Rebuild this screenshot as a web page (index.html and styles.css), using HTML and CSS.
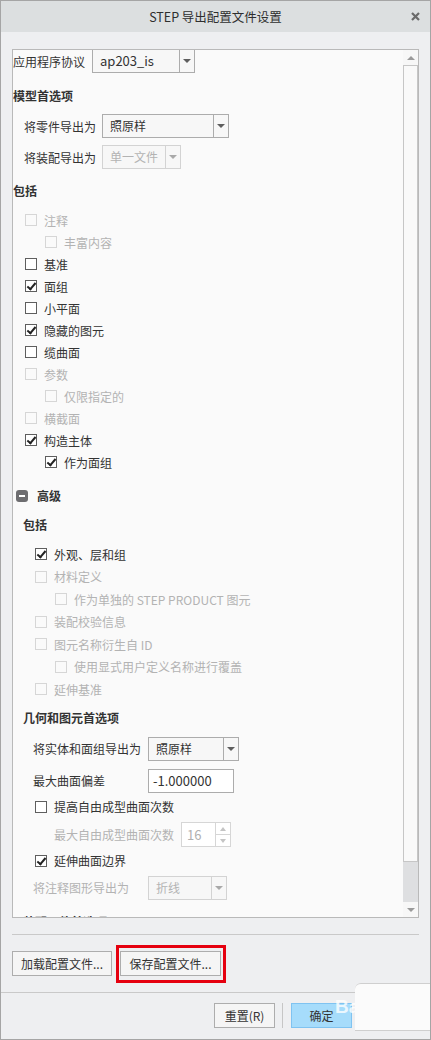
FILE: index.html
```html
<!DOCTYPE html>
<html lang="zh-CN">
<head>
    <meta charset="UTF-8">
    <title>STEP 导出配置文件设置</title>
    <link rel="stylesheet" href="styles.css">
</head>
<body>
    <div class="window">
        <div class="titlebar">
            <span class="title">STEP 导出配置文件设置</span>
            <svg class="close" width="9" height="9" viewBox="0 0 9 9">
                <path d="M1 1 L8 8 M8 1 L1 8" stroke="#6a6a6a" stroke-width="2.2" fill="none"/>
            </svg>
        </div>

        <div class="body">
            <div class="panel">
                <div class="panel-content">
                    <div class="row row-first">
                        <span class="label w-app">应用程序协议</span>
                        <div class="select sel-app"><span class="select-text">ap203_is</span><span class="select-arrow"></span></div>
                    </div>

                    <div class="heading mt12">模型首选项</div>
                    <div class="row mt7 indent-1">
                        <span class="label w-model">将零件导出为</span>
                        <div class="select sel-part"><span class="select-text">照原样</span><span class="select-arrow"></span></div>
                    </div>
                    <div class="row mt7 indent-1">
                        <span class="label w-model">将装配导出为</span>
                        <div class="select sel-asm disabled"><span class="select-text">单一文件</span><span class="select-arrow"></span></div>
                    </div>

                    <div class="heading mt11">包括</div>
                    <div class="checks mt7">
                        <div class="check lvl-1 disabled"><span class="box"></span>注释</div>
                        <div class="check lvl-2 disabled"><span class="box"></span>丰富内容</div>
                        <div class="check lvl-1"><span class="box"></span>基准</div>
                        <div class="check lvl-1"><span class="box checked"></span>面组</div>
                        <div class="check lvl-1"><span class="box"></span>小平面</div>
                        <div class="check lvl-1"><span class="box checked"></span>隐藏的图元</div>
                        <div class="check lvl-1"><span class="box"></span>缆曲面</div>
                        <div class="check lvl-1 disabled"><span class="box"></span>参数</div>
                        <div class="check lvl-2 disabled"><span class="box"></span>仅限指定的</div>
                        <div class="check lvl-1 disabled"><span class="box"></span>横截面</div>
                        <div class="check lvl-1"><span class="box checked"></span>构造主体</div>
                        <div class="check lvl-2"><span class="box checked"></span>作为面组</div>
                    </div>

                    <div class="heading advanced mt12"><span class="collapse"></span>高级</div>
                    <div class="heading sub mt7">包括</div>
                    <div class="checks adv mt7">
                        <div class="check lvl-3"><span class="box checked"></span>外观、层和组</div>
                        <div class="check lvl-3 disabled"><span class="box"></span>材料定义</div>
                        <div class="check lvl-4 disabled"><span class="box"></span>作为单独的 STEP PRODUCT 图元</div>
                        <div class="check lvl-3 disabled"><span class="box"></span>装配校验信息</div>
                        <div class="check lvl-3 disabled"><span class="box"></span>图元名称衍生自 ID</div>
                        <div class="check lvl-4 disabled"><span class="box"></span>使用显式用户定义名称进行覆盖</div>
                        <div class="check lvl-3 disabled"><span class="box"></span>延伸基准</div>
                    </div>

                    <div class="heading sub mt6">几何和图元首选项</div>
                    <div class="row mt8 indent-2">
                        <span class="label w-geom">将实体和面组导出为</span>
                        <div class="select sel-solid"><span class="select-text">照原样</span><span class="select-arrow"></span></div>
                    </div>
                    <div class="row mt8 indent-2">
                        <span class="label w-geom">最大曲面偏差</span>
                        <div class="input">-1.000000</div>
                    </div>
                    <div class="check lvl-3 mt3"><span class="box"></span>提高自由成型曲面次数</div>
                    <div class="row mt5 indent-3 disabled">
                        <span class="label w-spin">最大自由成型曲面次数</span>
                        <div class="spinner">
                            <span class="spin-text">16</span>
                            <span class="spin-btns"><span class="spin-up"></span><span class="spin-down"></span></span>
                        </div>
                    </div>
                    <div class="check lvl-3 mt3"><span class="box checked"></span>延伸曲面边界</div>
                    <div class="row mt4 indent-2 disabled">
                        <span class="label w-geom">将注释图形导出为</span>
                        <div class="select sel-note disabled"><span class="select-text">折线</span><span class="select-arrow"></span></div>
                    </div>
                    <div class="heading sub mt11">装配元件首选项</div>
                </div>

                <div class="scrollbar">
                    <span class="sb-btn sb-up"></span>
                    <span class="sb-thumb"></span>
                    <span class="sb-track"></span>
                    <span class="sb-btn sb-down"></span>
                </div>
            </div>

            <div class="divider"></div>

            <div class="file-row">
                <button class="btn btn-load">加载配置文件...</button>
                <div class="highlight">
                    <button class="btn btn-save">保存配置文件...</button>
                </div>
            </div>
        </div>

        <div class="footer-line"></div>
        <div class="footer">
            <button class="btn btn-reset">重置(R)</button>
            <span class="footer-sep"></span>
            <button class="btn btn-ok">确定</button>
        </div>

        <div class="wm-text">Bai</div>
        <div class="wm-box"></div>
    </div>
</body>
</html>
```

FILE: styles.css
```css
body { margin: 0; font-family: "Noto Sans CJK SC", "Noto Sans", sans-serif; font-size: 12px; color: #333; background: #fff; }
.window { position: relative; width: 431px; height: 1040px; box-sizing: border-box; border: 1px solid #a5a5a5; background: #eeeff1; overflow: hidden; }

/* title bar */
.titlebar { position: relative; height: 31px; background: #dcdfe0; display: flex; align-items: center; justify-content: center; }
.title { font-size: 12.5px; color: #2e2e2e; }
.close { position: absolute; right: 10px; top: 11px; }

.body { padding: 17px 11px 0 11px; }

/* scroll panel */
.panel { display: flex; height: 869px; box-sizing: border-box; border: 1px solid #b9b9b9; background: #fafafa; }
.panel-content { flex: 1; overflow: hidden; }
.scrollbar { width: 15px; display: flex; flex-direction: column; background: #dedfe1; }
.sb-btn { height: 15px; background: #f7f7f7; display: flex; align-items: center; justify-content: center; flex: none; }
.sb-up::after { content: ""; border-left: 4px solid transparent; border-right: 4px solid transparent; border-bottom: 4px solid #9a9a9a; }
.sb-down::after { content: ""; border-left: 4px solid transparent; border-right: 4px solid transparent; border-top: 4px solid #9a9a9a; }
.sb-thumb { height: 797px; flex: none; box-sizing: border-box; border: 1px solid #c6c6c6; background: #f9f9f9; }
.sb-track { flex: 1; }

/* rows */
.row { display: flex; align-items: center; height: 24px; }
.row-first { margin-top: -1px; }
.label { flex: none; white-space: nowrap; }
.w-app { width: 79px; }
.w-model { width: 78px; }
.w-geom { width: 115px; }
.w-spin { width: 127px; }
.indent-1 { padding-left: 11px; }
.indent-2 { padding-left: 20px; }
.indent-3 { padding-left: 41px; }
.row.disabled .label { color: #b3b3b3; }

.heading { height: 22px; line-height: 22px; font-weight: bold; color: #333; }
.heading.sub { padding-left: 10px; }
.advanced { display: flex; align-items: center; padding-left: 3px; }
.collapse { position: relative; width: 12px; height: 12px; border-radius: 3px; background: #6d6d70; margin-right: 9px; }
.collapse::after { content: ""; position: absolute; left: 3px; right: 3px; top: 5px; height: 2px; background: #fff; }

.mt3 { margin-top: 3px; }
.mt4 { margin-top: 4px; }
.mt5 { margin-top: 5px; }
.mt6 { margin-top: 6px; }
.mt7 { margin-top: 7px; }
.mt8 { margin-top: 8px; }
.mt11 { margin-top: 11px; }
.mt12 { margin-top: 12px; }

/* dropdowns and inputs */
.select { display: flex; height: 24px; box-sizing: border-box; border: 1px solid #acacac; background: #f7f7f7; }
.select-text { flex: 1; padding-left: 7px; line-height: 22px; white-space: nowrap; overflow: hidden; }
.select-arrow { width: 14px; border-left: 1px solid #acacac; display: flex; align-items: center; justify-content: center; }
.select-arrow::after { content: ""; border-left: 4px solid transparent; border-right: 4px solid transparent; border-top: 4px solid #5e5e5e; }
.select.disabled { border-color: #d3d3d3; }
.select.disabled .select-text { color: #b3b3b3; }
.select.disabled .select-arrow { border-left-color: #d3d3d3; }
.select.disabled .select-arrow::after { border-top-color: #a9a9a9; }
.sel-app { width: 103px; font-size: 13px; }
.sel-part { width: 127px; }
.sel-asm { width: 79px; }
.sel-solid { width: 91px; }
.sel-note { width: 79px; }

.input { width: 86px; height: 24px; box-sizing: border-box; border: 1px solid #acacac; background: #fff; padding-left: 4px; line-height: 22px; font-size: 13px; }

.spinner { display: flex; width: 50px; height: 25px; box-sizing: border-box; border: 1px solid #d6d6d6; background: #fff; }
.spin-text { flex: 1; padding-left: 5px; line-height: 23px; color: #b0b0b0; font-size: 13px; }
.spin-btns { width: 14px; border-left: 1px solid #d6d6d6; display: flex; flex-direction: column; }
.spin-up, .spin-down { flex: 1; display: flex; align-items: center; justify-content: center; }
.spin-up { border-bottom: 1px solid #d6d6d6; }
.spin-up::after { content: ""; border-left: 3px solid transparent; border-right: 3px solid transparent; border-bottom: 4px solid #c4c4c4; }
.spin-down::after { content: ""; border-left: 3px solid transparent; border-right: 3px solid transparent; border-top: 4px solid #c4c4c4; }

/* checkboxes */
.checks .check { height: 22px; }
.checks.adv .check { height: 22.5px; }
.check { display: flex; align-items: center; height: 22px; white-space: nowrap; }
.lvl-1 { padding-left: 12px; }
.lvl-2 { padding-left: 32px; }
.lvl-3 { padding-left: 22px; }
.lvl-4 { padding-left: 42px; }
.box { position: relative; flex: none; width: 12px; height: 12px; box-sizing: border-box; border: 1px solid #5e5e5e; background: #fff; margin-right: 7px; }
.box.checked::after { content: ""; position: absolute; left: 3px; top: 0; width: 3px; height: 7px; border-right: 2px solid #222; border-bottom: 2px solid #222; transform: rotate(40deg); }
.check.disabled { color: #b3b3b3; }
.check.disabled .box { border-color: #d6d6d6; background: #fafafa; }

/* footer buttons */
.divider { height: 1px; margin-top: 16px; background: #c9c9c9; }
.file-row { display: flex; align-items: flex-start; margin-top: 10px; }
.btn { height: 25px; box-sizing: border-box; border: 1px solid #adadad; background: #f5f5f5; font-family: inherit; font-size: 12px; color: #333; padding: 0; }
.btn-load { width: 100px; margin-top: 6px; }
.highlight { margin-left: 4px; border: 3px solid #e5000f; padding: 3px 2px 4px 1px; }
.btn-save { width: 101px; display: block; }

.footer-line { height: 1px; margin-top: 9px; background: #c9c9c9; }
.footer { display: flex; justify-content: flex-end; align-items: center; margin-top: 10px; padding-right: 78px; }
.btn-reset { width: 61px; }
.footer-sep { width: 1px; height: 25px; background: #c6c6c6; margin: 0 8px 0 7px; }
.btn-ok { width: 61px; background: #a6dcfb; border-color: #7fc3f1; }

/* watermark over the corner */
.wm-box { position: absolute; left: 354px; top: 982px; width: 76px; height: 46px; background: #fbfbfb; border-top: 1px solid #cfcfcf; border-bottom: 1px solid #cfcfcf; border-top-left-radius: 6px; }
.wm-text { position: absolute; left: 334px; top: 996px; font-family: "Liberation Sans", sans-serif; font-size: 19px; font-weight: bold; color: rgba(255,255,255,0.8); line-height: 20px; }
```
